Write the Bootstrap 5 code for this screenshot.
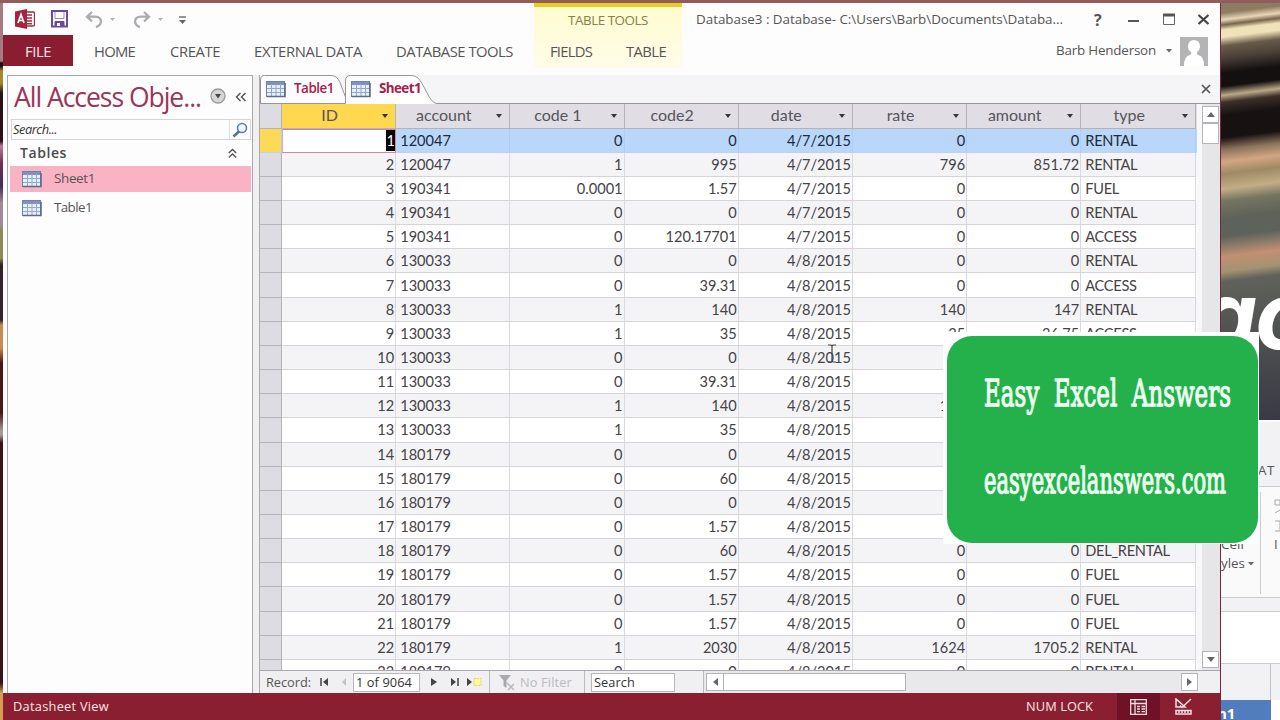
<!DOCTYPE html>
<html lang="en">
<head>
<meta charset="utf-8">
<title>Database3 : Database</title>
<link rel="stylesheet" href="https://cdn.jsdelivr.net/npm/bootstrap@5.3.0/dist/css/bootstrap.min.css">
<style>
html,body{width:1280px;height:720px;overflow:hidden}
body{font-family:"Open Sans","Noto Sans",sans-serif;font-size:13.4px;color:#555;line-height:1;background:#925c5a}
svg{display:block;flex:none}
[data-w]{display:inline-block;white-space:nowrap}
.desk{padding-top:3px}
.edge-l{width:3px;flex:none;background:linear-gradient(#a77a7e 0 58px,#1d0a12 60px 63px,#a28a2c 68px 80px,#2a1018 90px 138px,#c27a98 143px,#713051 160px,#4b2854 183px,#a08a9a 200px 222px,#8b8d52 228px 255px,#30242e 262px 317px,#cb8a4f 322px 345px,#4a1717 360px 410px,#a99 428px 432px,#381318 440px 680px,#d89b50 690px)}
.win{width:1218px;flex:none;background:#fefdfe;border-right:1px solid #7c2340}
.titlebar{height:32px}
.ctx{width:148px;background:linear-gradient(#fffbd0,#fffde9);border-top:4px solid #e6cd27;left:531px;top:0;height:65px}
.tabs-row{height:33px;font-size:14.8px}
.file-tab{width:70px;height:31px;background:#8a1e30;color:#f6e5e8;padding-top:2px}
.work{height:618px;margin-top:7px}
.nav-pane{width:246px;margin-left:4px;border:1px solid #a9a5aa;border-bottom:0}
.splitter{width:7px;background:#f1eff2;border-right:1px solid #aaa}
.nav-head{height:43px;color:#9c3557;font-size:26.5px}
.nav-search{height:21px;margin:0 1px 0 3px;border:1px solid #d6d4d8;color:#333;font-style:italic;font-size:12.8px}
.nav-search .go{width:21px;height:19px;border-left:1px solid #d6e2ee}
.nav-group{height:26px;font-weight:600;font-size:14px;color:#4a4a4c}
.nav-item-row{height:26px;padding-left:12px;margin:0 1px 0 2px;font-size:13.4px}
.nav-item-row.sel{background:#f9b3c4}
.doc{width:960px}
.doc-tabs{height:29px;background:#f5f4f7;border-bottom:1px solid #98959c}
.doc-tabs .t1{color:#a8204a;font-weight:600}
.grid-box{width:937px;height:566px;overflow:hidden;font-family:Lato,sans-serif;font-size:14.6px;color:#454347}
.g-row{display:grid;grid-template-columns:22px repeat(7,114.2px) 115px;height:24.17px;background:#fff}
.g-row>div{border-right:1px solid #dcd8e2;border-bottom:1px solid #d6d3da;padding:1px 1px 0 3px;display:flex;align-items:center;justify-content:flex-end;overflow:hidden;white-space:nowrap;line-height:18px}
.g-row>div:first-child{background:#dedce3;border-color:#b4b2bb}
.g-row>div:last-child{justify-content:flex-start;letter-spacing:-.3px;padding-left:4px}
.g-row .acct{justify-content:flex-start;padding-left:4px}
.g-row.alt{background:#f4f3f6}
.g-row.cur{background:#b8d7fa;color:#222b3a}
.g-row.cur>div{border-right-color:#aecdf0;border-bottom-color:#bcd3ef}
.g-row.cur>div:first-child{background:#fcd956}
.g-row.cur>.idc{background:#fff;border:1px solid #d8879a;border-left-color:#e6a5b3;padding:0}
.g-row.cur .idc span{background:#000;color:#fff;height:21px;line-height:22px;width:9px;text-align:center}
.g-row.head{height:24.5px;background:#e0dde4;font-size:16px;color:#57545c}
.g-row.head>div{border-color:#b5b2ba;justify-content:center;position:relative;padding:0 18px 1px 0}
.g-row.head>div:first-child{background:#dedce3}
.g-row.head>div:last-child{letter-spacing:0;justify-content:center}
.g-row.head>.idc{background:#ffd84f}
.dd{position:absolute;right:7px;top:10px;border:3px solid transparent;border-top:4px solid #38363c;border-bottom:0}
.vbar{width:23px;height:566px;background:#e6e5e8;border-left:5px solid #f8f7f9;padding:2px 2px 0 0}
.sb{background:#fff;border:1px solid #b5b3b8}
.vbar .sb{width:17px;height:17px}
.recbar{height:23px;background:#f0eff2;border-top:1px solid #aaa8ae;font-size:12.8px;color:#555}
.recbar .fld{background:#fff;border:1px solid #b9b7be;height:19px;color:#333}
.hbar{background:#e9e8eb;height:22px}
.status{height:27px;background:#8a1f31;color:#f7e7e9;font-size:12.8px}
.view-on{width:43px;height:27px;background:#6f1226}
.edge-r{width:59px;height:717px;overflow:hidden;position:relative}
.photo{height:417px;overflow:hidden;position:relative;background:linear-gradient(173deg,#8c7d62 0 10px,#e8d7b6 17px,#77654a 22px,#efe2b8 27px 34px,#695b48 43px,#4b403a 55px,#14100f 70px 83px,#b9a987 92px,#3c3028 99px,#171112 112px 134px,#8a7459 146px,#d2a683 158px,#9d8a65 170px,#c3ad86 185px,#747660 197px,#5d625a 215px 232px,#777362 238px,#c28f72 252px,#a39371 267px,#5f615a 277px,#4d4f4f 340px,#3a3a45 420px)}
.logo{position:absolute;left:-23px;top:262px;font:italic bold 94px/100px Inter,"Liberation Sans",sans-serif;color:#fff;letter-spacing:-2px}
.sheet{height:300px;background:#f2f1f3;border-top:2px solid #fafafa;color:#555}
.banner{left:943px;top:332px;width:316px;height:212px;background:#fff}
.banner .green{margin:4px 0 0 4px;width:311px;height:207px;background:#24b14c;border-radius:25px;color:#edfff0;position:relative;overflow:hidden}
.slab{position:absolute;left:37px;font-family:"DejaVu Serif",serif;white-space:pre;transform-origin:0 50%;line-height:40px;-webkit-text-stroke:1.3px #edfff0}
</style>
<script src="https://cdn.jsdelivr.net/npm/bootstrap@5.3.0/dist/js/bootstrap.bundle.min.js"></script>
</head>
<body>
<svg width="0" height="0" class="position-absolute"><defs>
<symbol id="tbl" viewBox="0 0 20 17"><rect x=".5" y=".5" width="18" height="15" fill="#e6effb" stroke="#7182a3"/><rect x="1" y="1" width="17" height="3" fill="#7c93bd"/><path d="M5.500 3v12M10 3v12M14.500 3v12M1 7.500h17M1 11.500h17" stroke="#93a8cd"/><path d="M1 15.500h18V2" fill="none" stroke="#5f6c89" stroke-width="1.600"/></symbol>
</defs></svg>
<div class="desk d-flex">
 <div class="edge-l"></div>
 <main class="win position-relative">
  <div class="ctx position-absolute"></div>
  <header class="titlebar d-flex align-items-center position-relative">
   <svg style="margin-left:12px" width="20" height="20" viewBox="0 0 20 20"><path d="M10 3h8q1.500 0 1.500 1.500v11q0 1.500-1.500 1.500h-8z" fill="#fff" stroke="#a22a3e" stroke-width="1.300"/><path d="M12 6h5M12 9h5M12 12h5M12 14.700h5" stroke="#a22a3e" stroke-width="1.500"/><path d="M0 2.500 12 0v20L0 17.500z" fill="#a3243b"/><path d="M3 14 6 5.500 9 14M4 11.500h4" fill="none" stroke="#fff" stroke-width="1.700"/></svg>
   <svg style="margin-left:16px" width="17" height="18" viewBox="0 0 17 18"><path d="M1 1h15v15.500H1z" fill="#fff" stroke="#6b4a9c" stroke-width="2"/><path d="M4 2v6.500h9V2" fill="#fff" stroke="#9c86c2" stroke-width="1"/><path d="M4 16v-4.500h9V16" fill="#6b4a9c" stroke="#6b4a9c"/><path d="M6 13h3v3H6z" fill="#fff"/></svg>
   <svg style="margin-left:17px" width="18" height="17" viewBox="0 0 18 17"><path d="M7 1 2 5.700l5 4.800M2.500 5.700H10q6 .3 6 5-.5 4-5 5.500" fill="none" stroke="#ababb0" stroke-width="2.300"/></svg>
   <svg style="margin-left:7px" width="5" height="3"><path d="M0 0h5L2.500 3z" fill="#b5b5b8"/></svg>
   <svg style="margin-left:18px" width="18" height="17" viewBox="0 0 18 17"><path d="m11 1 5 4.700-5 4.800M15.500 5.700H8q-6 .3-6 5 .5 4 5 5.500" fill="none" stroke="#ababb0" stroke-width="2.300"/></svg>
   <svg style="margin-left:7px" width="5" height="3"><path d="M0 0h5L2.500 3z" fill="#b5b5b8"/></svg>
   <svg style="margin:3px 0 0 16px" width="7" height="9"><path d="M0 1h7" stroke="#666" stroke-width="1.400"/><path d="M0 4h7L3.500 8z" fill="#666"/></svg>
   <span style="margin-left:382px;color:#85824c;font-size:13.4px;margin-top:3px" data-w="80">TABLE TOOLS</span>
   <span style="margin-left:48px;margin-top:2px" data-w="367">Database3 : Database- C:\Users\Barb\Documents\Databa...</span>
   <b style="margin-left:31px;font-size:16px;margin-top:2px" data-w="8">?</b>
   <svg style="margin-left:26px" width="92" height="16" viewBox="0 0 92 16"><path d="M0 10h11" stroke="#555" stroke-width="2"/><path d="M35.500 4.500h11v9h-11z" fill="none" stroke="#666"/><path d="M35 4h12" stroke="#555" stroke-width="3"/><path d="m70.500 4 10 9M80.500 4l-10 9" stroke="#444" stroke-width="2.300"/></svg>
  </header>
  <nav class="tabs-row d-flex position-relative align-items-start">
   <div class="file-tab d-flex align-items-center justify-content-center"><span data-w="26">FILE</span></div>
   <div class="d-flex align-items-center" style="height:32px;margin-left:21px">
    <span data-w="41">HOME</span><span style="margin-left:35px" data-w="50">CREATE</span><span style="margin-left:34px" data-w="108">EXTERNAL DATA</span><span style="margin-left:34px" data-w="117">DATABASE TOOLS</span><span style="margin-left:37px" data-w="42">FIELDS</span><span style="margin-left:34px" data-w="40">TABLE</span>
    <span style="margin-left:390px;font-size:13.4px" data-w="100">Barb Henderson</span>
    <svg style="margin-left:10px" width="6" height="4"><path d="M0 0h6L3 3.500z" fill="#666"/></svg>
    <svg style="margin-left:8px" width="28" height="29" viewBox="0 0 28 29"><path d="M0 0h28v29H0z" fill="#b4b3b5"/><path d="M4 29q0-10 6-11 2-1 1-3-3-2-3-6 .500-6 6-6t6 6q0 4-3 6-1 2 1 3 6 1 6 11z" fill="#fff"/></svg>
   </div>
  </nav>
  <div class="work d-flex">
   <aside class="nav-pane">
    <div class="nav-head d-flex align-items-center"><span style="margin-left:6px" data-w="187">All Access Obje...</span>
     <svg style="margin:-4px 0 0 9px" width="16" height="16"><circle cx="8" cy="8" r="7" fill="#d6d5d7" stroke="#9a999c" stroke-width="1.300"/><path d="M5 6h6l-3 4.500z" fill="#444"/></svg>
     <svg style="margin:-2px 0 0 9px" width="12" height="10"><path d="M5.500 1 1.500 5l4 4M10.500 1l-4 4 4 4" fill="none" stroke="#555" stroke-width="1.500"/></svg></div>
    <div class="nav-search d-flex align-items-center justify-content-between"><span style="margin-left:1px" data-w="44">Search...</span><div class="go d-flex align-items-center justify-content-center"><svg width="16" height="16"><circle cx="10" cy="6" r="4.500" fill="#f4f9ff" stroke="#557fb2" stroke-width="1.600"/><path d="m7 9.500-5.500 5" stroke="#4a6fa0" stroke-width="2.500"/></svg></div></div>
    <div class="nav-group d-flex align-items-center justify-content-between"><span style="margin-left:12px" data-w="47">Tables</span><svg style="margin-right:15px" width="9" height="11"><path d="m.800 5 3.700-3.500L8.200 5M.8 9.500 4.500 6l3.700 3.500" fill="none" stroke="#555" stroke-width="1.400"/></svg></div>
    <div class="nav-item-row sel d-flex align-items-center"><svg width="20" height="17"><use href="#tbl"/></svg><span style="margin-left:12px" data-w="41">Sheet1</span></div>
    <div class="nav-item-row d-flex align-items-center" style="margin-top:3px"><svg width="20" height="17"><use href="#tbl"/></svg><span style="margin-left:12px" data-w="38">Table1</span></div>
   </aside>
   <div class="splitter"></div>
   <section class="doc">
    <div class="doc-tabs position-relative">
     <svg class="position-absolute" style="left:0;top:0" width="190" height="29"><path d="M.5 28.500V5q0-4.500 4-4.500H71q6 0 9 7l6 16v5z" fill="#fdfcfd" stroke="#98959c"/><path d="M85.500 29V6q0-5.500 5-5.500H151q7 0 11 8l7 13q4 7 8 7V29z" fill="#fff"/><path d="M85.500 28.500V6q0-5.500 5-5.500H151q7 0 11 8l7 13q4 7 8 7" fill="none" stroke="#98959c"/></svg>
     <div class="d-flex align-items-center position-relative" style="height:28px"><svg style="margin-left:6px" width="20" height="17"><use href="#tbl"/></svg><span class="t1" style="margin-left:8px" data-w="40">Table1</span><svg style="margin-left:17px" width="20" height="17"><use href="#tbl"/></svg><b class="t1 fw-bold" style="margin-left:8px" data-w="42">Sheet1</b><svg style="margin-left:780px" width="10" height="10"><path d="m1 1 8 8M9 1 1 9" stroke="#555" stroke-width="1.700"/></svg></div>
    </div>
    <div class="d-flex"><div class="grid-box" id="grid"></div>
     <div class="vbar"><div class="sb d-flex align-items-center justify-content-center"><svg width="8" height="5"><path d="M0 5h8L4 0z" fill="#666"/></svg></div><div class="sb" style="height:21px"></div><div style="height:507px"></div><div class="sb d-flex align-items-center justify-content-center"><svg width="8" height="5"><path d="M0 0h8L4 5z" fill="#666"/></svg></div></div>
    </div>
    <div class="recbar d-flex align-items-center">
     <span style="margin-left:6px" data-w="45">Record:</span>
     <svg style="margin-left:9px" width="8" height="8"><path d="M1 0v8" stroke="#444" stroke-width="1.500"/><path d="M8 0v8L3 4z" fill="#444"/></svg>
     <svg style="margin-left:14px" width="4" height="8"><path d="M4 0v8L0 4z" fill="#c2c1c5"/></svg>
     <div class="fld d-flex align-items-center" style="margin-left:7px;width:67px;padding-left:2px"><span data-w="56">1 of 9064</span></div>
     <svg style="margin-left:11px" width="54" height="12"><path d="M0 2v8l6-4zM20 2v8l5-4zM36 2v8l5-4z" fill="#444"/><path d="M27 2v8" stroke="#444" stroke-width="1.500"/><path d="M43 2.500h7v7h-7z" fill="#fff89a" stroke="#e2d85a" stroke-dasharray="2 1"/></svg>
     <div class="d-flex align-items-center border-start border-end" style="width:96px;height:22px;margin-left:4px;border-color:#bbb!important"><svg style="margin-left:8px" width="18" height="17"><path d="M1 1h12L8.500 6.500V14l-3-2V6.500z" fill="#a9a8ad"/><path d="m9 9 7 7M16 10l-6 6" stroke="#b9b8bd" stroke-width="1.500"/></svg><span style="margin-left:4px;color:#bdbbc0" data-w="52">No Filter</span></div>
     <div class="fld d-flex align-items-center" style="margin-left:6px;width:84px;padding-left:2px"><span data-w="41">Search</span></div>
     <div class="hbar d-flex align-items-center" style="margin-left:28px;width:495px;border-left:1px solid #bbb"><div class="sb d-flex align-items-center justify-content-center" style="width:18px;height:18px;margin-left:2px"><svg width="5" height="8"><path d="M5 0v8L0 4z" fill="#666"/></svg></div><div class="sb" style="width:183px;height:18px;margin-left:-1px"></div><div class="sb d-flex align-items-center justify-content-center" style="width:17px;height:18px;margin-left:275px"><svg width="5" height="8"><path d="M0 0v8l5-4z" fill="#666"/></svg></div></div>
    </div>
   </section>
  </div>
  <footer class="status d-flex align-items-center"><span style="margin-left:10px" data-w="96">Datasheet View</span><span style="margin-left:917px" data-w="67">NUM LOCK</span>
   <div class="view-on d-flex align-items-center justify-content-center" style="margin-left:24px"><svg width="17" height="16"><path d="M.700.7h15.600v14.600H.700zM.700 4.500h15.600M5 .7v14.600M7 7.500h3m1.500 0H15M7 10h3m1.500 0H15M7 12.700h3m1.500 0H15" fill="none" stroke="#f4dfe3" stroke-width="1.300"/></svg></div>
   <svg style="margin-left:15px" width="18" height="17"><path d="M1 1v8h9zM5 7.500l2 2L16 1M1 12.500h15v3.500H1zM4 13v2m3-2v2m3-2v2m3-2v2" fill="none" stroke="#f4dfe3" stroke-width="1.500"/></svg>
  </footer>
 </main>
 <div class="edge-r">
  <div class="photo"><div class="logo">ac</div></div>
  <div class="sheet">
   <div style="height:64px;padding:42px 0 0 37px"><span data-w="17">AT</span></div>
   <div class="d-flex" style="height:112px;background:#fbfafb;border-top:1px solid #ccc;border-bottom:1px solid #ccc">
    <div style="width:42px;height:102px;margin-top:5px;border-right:1px solid #ccc;padding-top:46px"><div data-w="23">Cell</div><div class="d-flex align-items-center" style="margin-top:6px"><span data-w="24">yles</span><svg style="margin-left:3px" width="6" height="4"><path d="M0 0h6L3 3.500z" fill="#666"/></svg></div></div>
    <div style="padding:12px 0 0 13px"><svg width="6" height="34"><path d="M1 1h5v5H1zM1 14l5-3M1 22h5v10H1" fill="none" stroke="#aaa"/></svg><div style="padding-top:5px">I</div></div>
   </div>
   <div style="height:13px"></div>
   <div style="height:53px;background:#fff;border-top:1px solid #ccc;border-bottom:1px solid #ccc"></div>
   <div style="height:36px;width:50px;border-right:1px solid #c4c4c6"></div>
   <div class="d-flex bg-white" style="height:30px"><div style="width:50px;background:#527dbd;color:#fff;font:bold 15px/27px 'Open Sans',sans-serif;text-indent:-4px">n1</div></div>
  </div>
 </div>
</div>
<div class="banner position-absolute"><div class="green">
 <div class="slab" style="font-size:38px;top:37px" data-fit="247">Easy  Excel  Answers</div>
 <div class="slab" style="font-size:35px;top:125px" data-fit="242">easyexcelanswers.com</div>
</div></div>
<svg class="position-absolute" style="left:827px;top:344px" width="10" height="19"><path d="M1 1h3l1 1 1-1h3M5 2v15M1 18h3l1-1 1 1h3" fill="none" stroke="#444" stroke-width="1.200"/></svg>
<script>
const rows=[
['120047','0','0','4/7/2015','0','0','RENTAL'],['120047','1','995','4/7/2015','796','851.72','RENTAL'],
['190341','0.0001','1.57','4/7/2015','0','0','FUEL'],['190341','0','0','4/7/2015','0','0','RENTAL'],
['190341','0','120.17701','4/7/2015','0','0','ACCESS'],['130033','0','0','4/8/2015','0','0','RENTAL'],
['130033','0','39.31','4/8/2015','0','0','ACCESS'],['130033','1','140','4/8/2015','140','147','RENTAL'],
['130033','1','35','4/8/2015','35','36.75','ACCESS'],['130033','0','0','4/8/2015','','',''],
['130033','0','39.31','4/8/2015','','',''],['130033','1','140','4/8/2015','140','',''],
['130033','1','35','4/8/2015','','',''],['180179','0','0','4/8/2015','','',''],
['180179','0','60','4/8/2015','','',''],['180179','0','0','4/8/2015','','',''],
['180179','0','1.57','4/8/2015','','',''],['180179','0','60','4/8/2015','0','0','DEL_RENTAL'],
['180179','0','1.57','4/8/2015','0','0','FUEL'],['180179','0','1.57','4/8/2015','0','0','FUEL'],
['180179','0','1.57','4/8/2015','0','0','FUEL'],['180179','1','2030','4/8/2015','1624','1705.2','RENTAL'],
['180179','0','0','4/8/2015','0','0','RENTAL']];
const heads=['ID','account','code 1','code2','date','rate','amount','type'];
document.getElementById('grid').innerHTML=
 '<div class="g-row head"><div></div>'+heads.map((h,i)=>`<div class="${i?'':'idc'}">${h}<i class="dd"></i></div>`).join('')+'</div>'+
 rows.map((r,i)=>`<div class="g-row ${i==0?'cur':i%2?'alt':''}"><div></div><div class="idc"><span>${i+1}</span></div>`+r.map((c,j)=>`<div class="${j?'':'acct'}">${c}</div>`).join('')+'</div>').join('');
// Space each label to its intended width
document.querySelectorAll('[data-w]').forEach(e=>{
 const w=+e.dataset.w,n=e.textContent.length,r=document.createRange();
 r.selectNodeContents(e);
 e.style.letterSpacing=(w-r.getBoundingClientRect().width)/n+'px';
});
document.querySelectorAll('[data-fit]').forEach(e=>{e.style.transform=`scaleX(${e.dataset.fit/e.offsetWidth})`});
</script>
</body>
</html>
